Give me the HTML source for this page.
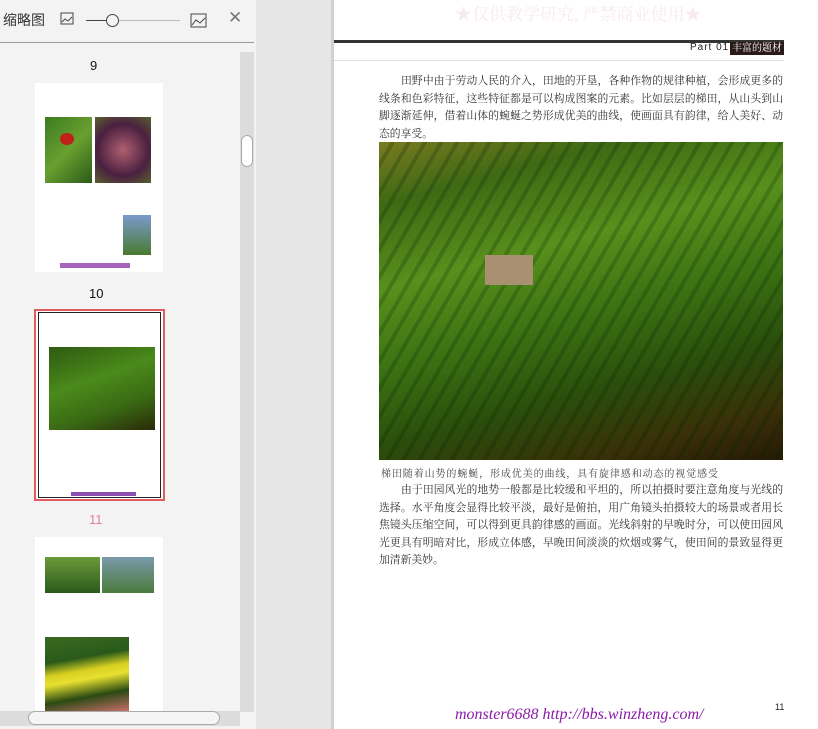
<!DOCTYPE html>
<html><head><meta charset="utf-8"><style>
*{margin:0;padding:0;box-sizing:border-box}
body{width:818px;height:729px;overflow:hidden;background:#e6e6e6;font-family:"Liberation Sans","Noto Sans CJK SC",sans-serif;position:relative}
.left{position:absolute;left:0;top:0;width:256px;height:729px;background:#f3f3f3}
.abs{position:absolute}
.serif{font-family:"Liberation Serif","Noto Serif CJK SC",serif}
.p{position:absolute;left:379px;width:404px;font-size:10.8px;line-height:17.5px;color:#333;font-family:"Liberation Serif","Noto Serif CJK SC",serif}
.p div{white-space:nowrap;text-align:justify;text-align-last:justify;height:17.5px}
.p div.l{text-align-last:left}
.p div.i{padding-left:22px}
.thumb{position:absolute;background:#fff}
</style></head><body>
<div class="left">
  <div class="abs" style="left:3px;top:10px;font-size:14px;color:#333">缩略图</div>
  <svg class="abs" style="left:60px;top:12px" width="16" height="14"><rect x="1" y="1" width="12" height="11" fill="none" stroke="#444"/><path d="M2 10 L5 7 L8 9 L12 5" fill="none" stroke="#444"/></svg>
  <div class="abs" style="left:86px;top:20px;width:94px;height:1px;background:#bbb"></div>
  <div class="abs" style="left:86px;top:20px;width:22px;height:1px;background:#444"></div>
  <div class="abs" style="left:106px;top:14px;width:13px;height:13px;border:1px solid #444;border-radius:50%;background:#f3f3f3"></div>
  <svg class="abs" style="left:190px;top:12px" width="18" height="16"><rect x="1" y="2" width="15" height="13" fill="none" stroke="#444"/><path d="M2 13 L6 8 L10 11 L15 6" fill="none" stroke="#444"/></svg>
  <div class="abs" style="left:228px;top:8px;font-size:17px;color:#777">✕</div>
  <div class="abs" style="left:0;top:42px;width:254px;height:1px;background:#999"></div>
  <div class="abs" style="left:90px;top:58px;font-size:13px;color:#111">9</div>
  <div class="thumb" style="left:35px;top:83px;width:128px;height:189px">
    <div class="abs" style="left:10px;top:34px;width:47px;height:66px;background:linear-gradient(135deg,#3a7a20,#6aa030 50%,#2b5a18)"></div>
    <div class="abs" style="left:25px;top:50px;width:14px;height:12px;background:#c02018;border-radius:50%"></div>
    <div class="abs" style="left:60px;top:34px;width:56px;height:66px;background:radial-gradient(circle at 50% 50%,#b06070,#4a2040 60%,#5a6030)"></div>
    <div class="abs" style="left:88px;top:132px;width:28px;height:40px;background:linear-gradient(#7a9acc,#4a7a30)"></div>
    <div class="abs" style="left:25px;top:180px;width:70px;height:5px;background:#8020a0;opacity:.7"></div>
  </div>
  <div class="abs" style="left:89px;top:286px;font-size:13px;color:#111">10</div>
  <div class="thumb" style="left:34px;top:309px;width:131px;height:192px;border:2px solid #e05a5e">
    <div class="abs" style="left:2px;top:1px;width:123px;height:186px;border:1px solid #222"></div>
    <div class="abs" style="left:13px;top:36px;width:106px;height:83px;background:linear-gradient(160deg,#2e5a12,#4a8a1a 40%,#3a6a14 70%,#2a2a08)"></div>
    <div class="abs" style="left:35px;top:181px;width:65px;height:4px;background:#7020a0;opacity:.8"></div>
  </div>
  <div class="abs" style="left:89px;top:512px;font-size:13px;color:#e87aa0">11</div>
  <div class="thumb" style="left:35px;top:537px;width:128px;height:175px">
    <div class="abs" style="left:10px;top:20px;width:55px;height:36px;background:linear-gradient(#6a9a3a,#2a5a1a)"></div>
    <div class="abs" style="left:67px;top:20px;width:52px;height:36px;background:linear-gradient(#7a9aaa,#4a7a3a)"></div>
    <div class="abs" style="left:10px;top:100px;width:84px;height:75px;background:linear-gradient(170deg,#3a6a20,#2a5a1a 30%,#d8d020 45%,#e8e030 55%,#2a4a12 75%,#d07070)"></div>
  </div>
  <div class="abs" style="left:240px;top:52px;width:14px;height:660px;background:#dcdcdc"></div>
  <div class="abs" style="left:241px;top:135px;width:12px;height:32px;background:#fff;border:1px solid #aaa;border-radius:6px"></div>
  <div class="abs" style="left:0;top:711px;width:240px;height:15px;background:#dcdcdc"></div>
  <div class="abs" style="left:28px;top:711px;width:192px;height:14px;background:#f5f5f5;border:1px solid #aaa;border-radius:7px"></div>
</div>
<div class="abs" style="left:331px;top:0;width:3px;height:729px;background:#d0d0d0"></div>
<div class="abs" style="left:334px;top:0;width:484px;height:729px;background:#fff"></div>
<div class="abs serif" style="left:455px;top:0;font-size:17px;color:#f8eaf0">★仅供教学研究, 严禁商业使用★</div>
<div class="abs" style="left:334px;top:40px;width:450px;height:3px;background:#333"></div>
<div class="abs" style="left:690px;top:42px;font-size:10px;color:#222;letter-spacing:1px">Part 01</div>
<div class="abs serif" style="left:730px;top:42px;width:54px;height:13px;background:#2a1a1a;color:#fff;font-size:10px;line-height:13px;text-align:center">丰富的题材</div>
<div class="abs" style="left:334px;top:60px;width:450px;height:1px;background:#ddd"></div>
<div class="p" style="top:73px">
<div class="i">田野中由于劳动人民的介入，田地的开垦，各种作物的规律种植，会形成更多的</div>
<div>线条和色彩特征，这些特征都是可以构成图案的元素。比如层层的梯田，从山头到山</div>
<div>脚逐渐延伸，借着山体的蜿蜒之势形成优美的曲线，使画面具有韵律，给人美好、动</div>
<div class="l">态的享受。</div>
</div>
<div class="abs" style="left:379px;top:142px;width:404px;height:318px;background:linear-gradient(165deg,#7a7a20 0%,#3e6a14 15%,#58901c 35%,#3a7012 55%,#2a4e0c 72%,#3a3008 88%,#241a06 100%)"></div>
<div class="abs" style="left:379px;top:142px;width:404px;height:318px;background:repeating-linear-gradient(120deg,rgba(0,0,0,0) 0 10px,rgba(0,30,0,.3) 10px 14px);opacity:.7"></div>
<div class="abs" style="left:485px;top:255px;width:48px;height:30px;background:#a89070"></div>
<div class="abs serif" style="left:381px;top:465px;font-size:10px;color:#444;letter-spacing:0.9px;white-space:nowrap">梯田随着山势的蜿蜒，形成优美的曲线，具有旋律感和动态的视觉感受</div>
<div class="p" style="top:482px">
<div class="i">由于田园风光的地势一般都是比较缓和平坦的，所以拍摄时要注意角度与光线的</div>
<div>选择。水平角度会显得比较平淡，最好是俯拍，用广角镜头拍摄较大的场景或者用长</div>
<div>焦镜头压缩空间，可以得到更具韵律感的画面。光线斜射的早晚时分，可以使田园风</div>
<div>光更具有明暗对比，形成立体感，早晚田间淡淡的炊烟或雾气，使田间的景致显得更</div>
<div class="l">加清新美妙。</div>
</div>
<div class="abs serif" style="left:455px;top:706px;font-size:16px;font-style:italic;color:#8a1aa8">monster6688 http://bbs.winzheng.com/</div>
<div class="abs" style="left:775px;top:702px;font-size:9px;color:#222">11</div>
</body></html>
